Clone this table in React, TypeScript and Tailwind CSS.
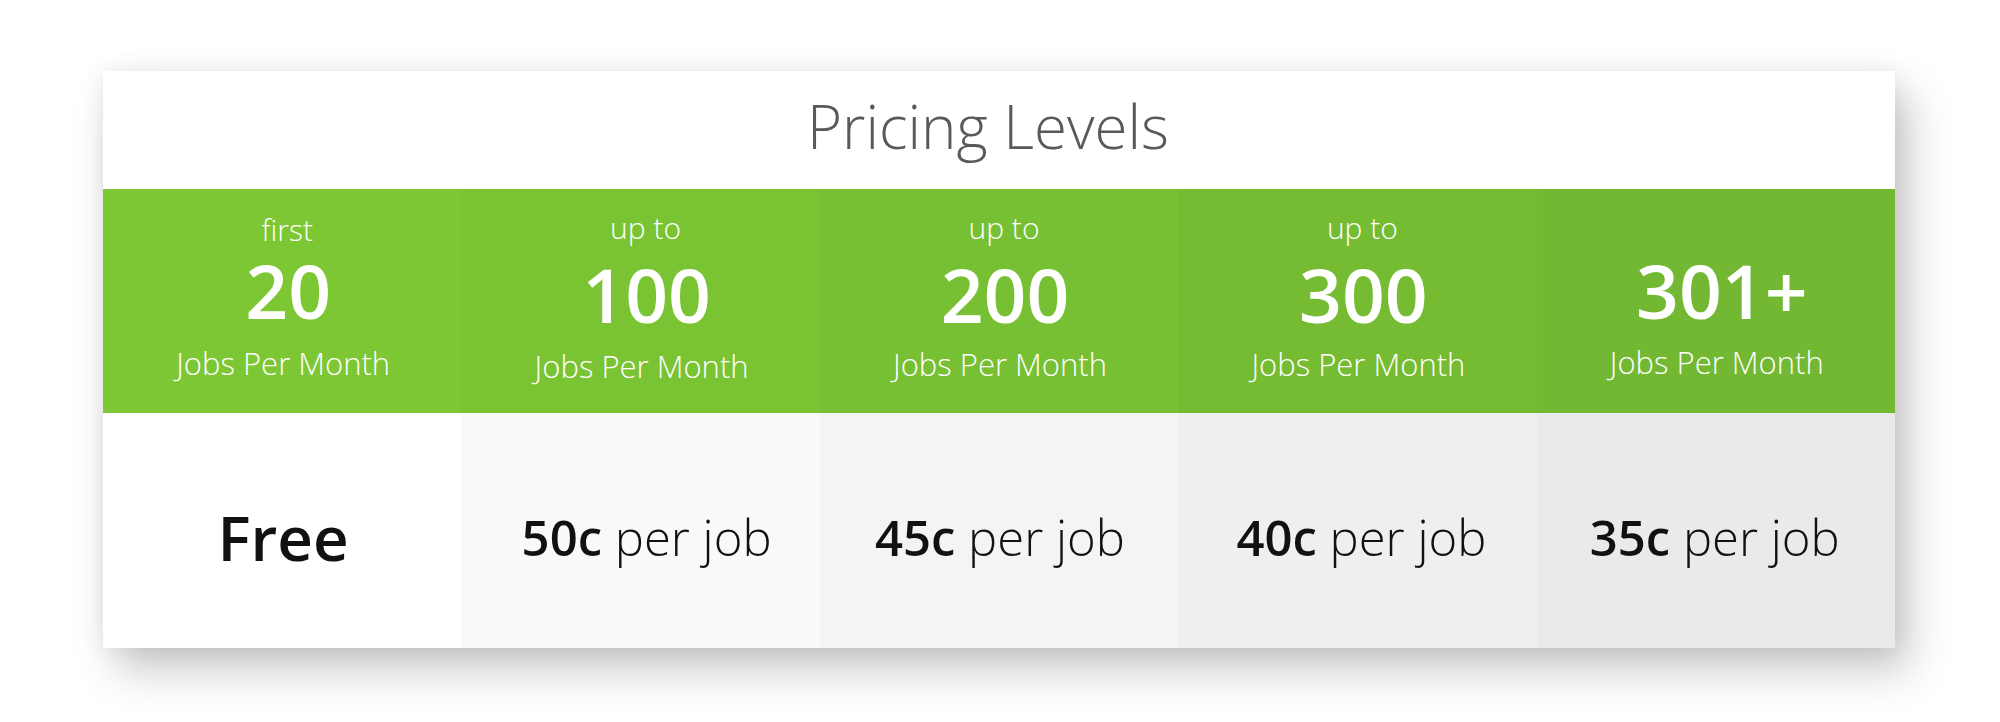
import React from "react";

type Tier = {
  label: string;
  count: string;
  green: string;
  gray: string;
  price: string;
  labelCls: string;
  numCls: string;
  jobsCls: string;
  priceCls: string;
};

const tiers: Tier[] = [
  { label: "first", count: "20", green: "bg-[#7dc735]", gray: "bg-[#ffffff]", price: "", labelCls: "mt-0", numCls: "mt-[2px]", jobsCls: "mt-[13px]", priceCls: "pl-[2px]" },
  { label: "up to", count: "100", green: "bg-[#7ac433]", gray: "bg-[#f9f9f9]", price: "50c", labelCls: "-mt-[2px]", numCls: "mt-[8px]", jobsCls: "mt-[12px]", priceCls: "pl-[12px]" },
  { label: "up to", count: "200", green: "bg-[#78c033]", gray: "bg-[#f4f4f4]", price: "45c", labelCls: "-mt-[2px]", numCls: "mt-[8px]", jobsCls: "mt-[10px]", priceCls: "pl-[2px]" },
  { label: "up to", count: "300", green: "bg-[#76bc33]", gray: "bg-[#efefef]", price: "40c", labelCls: "-mt-[2px]", numCls: "mt-[8px]", jobsCls: "mt-[10px]", priceCls: "pl-[8px]" },
  { label: "", count: "301+", green: "bg-[#73b833]", gray: "bg-[#eaeaea]", price: "35c", labelCls: "mt-0", numCls: "mt-[2px]", jobsCls: "mt-[12px]", priceCls: "pr-[2px]" },
];

export default function App() {
  return (
    <div
      className="min-h-[722px] w-full bg-white pt-[71px] pl-[103px]"
      style={{ fontFamily: '"Open Sans", "Noto Sans", sans-serif' }}
    >
      <div className="w-[1792px] bg-white shadow-[14px_22px_40px_rgba(0,0,0,0.22),0_0_22px_rgba(0,0,0,0.07)]">
        <div className="flex h-[118px] items-center justify-center pr-[22px]">
          <h1 className="mt-[-8px] text-[60px] font-light leading-[80px] text-[#58595b]">
            Pricing Levels
          </h1>
        </div>
        <div className="grid h-[224px] grid-cols-5">
          {tiers.map((t, i) => (
            <div
              key={i}
              className={`flex flex-col items-center pt-[23px] text-white ${t.green}`}
            >
              <div className={`ml-[10px] h-[36px] text-[30px] font-light leading-[36px] ${t.labelCls}`}>
                {t.label}
              </div>
              <div className={`ml-[12px] text-[75px] font-semibold leading-[80px] ${t.numCls}`}>
                {t.count}
              </div>
              <div className={`ml-[2px] text-[31px] font-light leading-[40px] ${t.jobsCls}`}>
                Jobs Per Month
              </div>
            </div>
          ))}
        </div>
        <div className="grid h-[235px] grid-cols-5">
          {tiers.map((t, i) => (
            <div
              key={i}
              className={`flex items-center justify-center pt-[12px] text-[#111111] ${t.gray} ${t.priceCls}`}
            >
              {t.price === "" ? (
                <span className="text-[62px] font-semibold leading-[80px]">Free</span>
              ) : (
                <span className="text-[49px] leading-[64px]">
                  <span className="font-semibold">{t.price}</span>{" "}
                  <span className="font-light">per job</span>
                </span>
              )}
            </div>
          ))}
        </div>
      </div>
    </div>
  );
}
